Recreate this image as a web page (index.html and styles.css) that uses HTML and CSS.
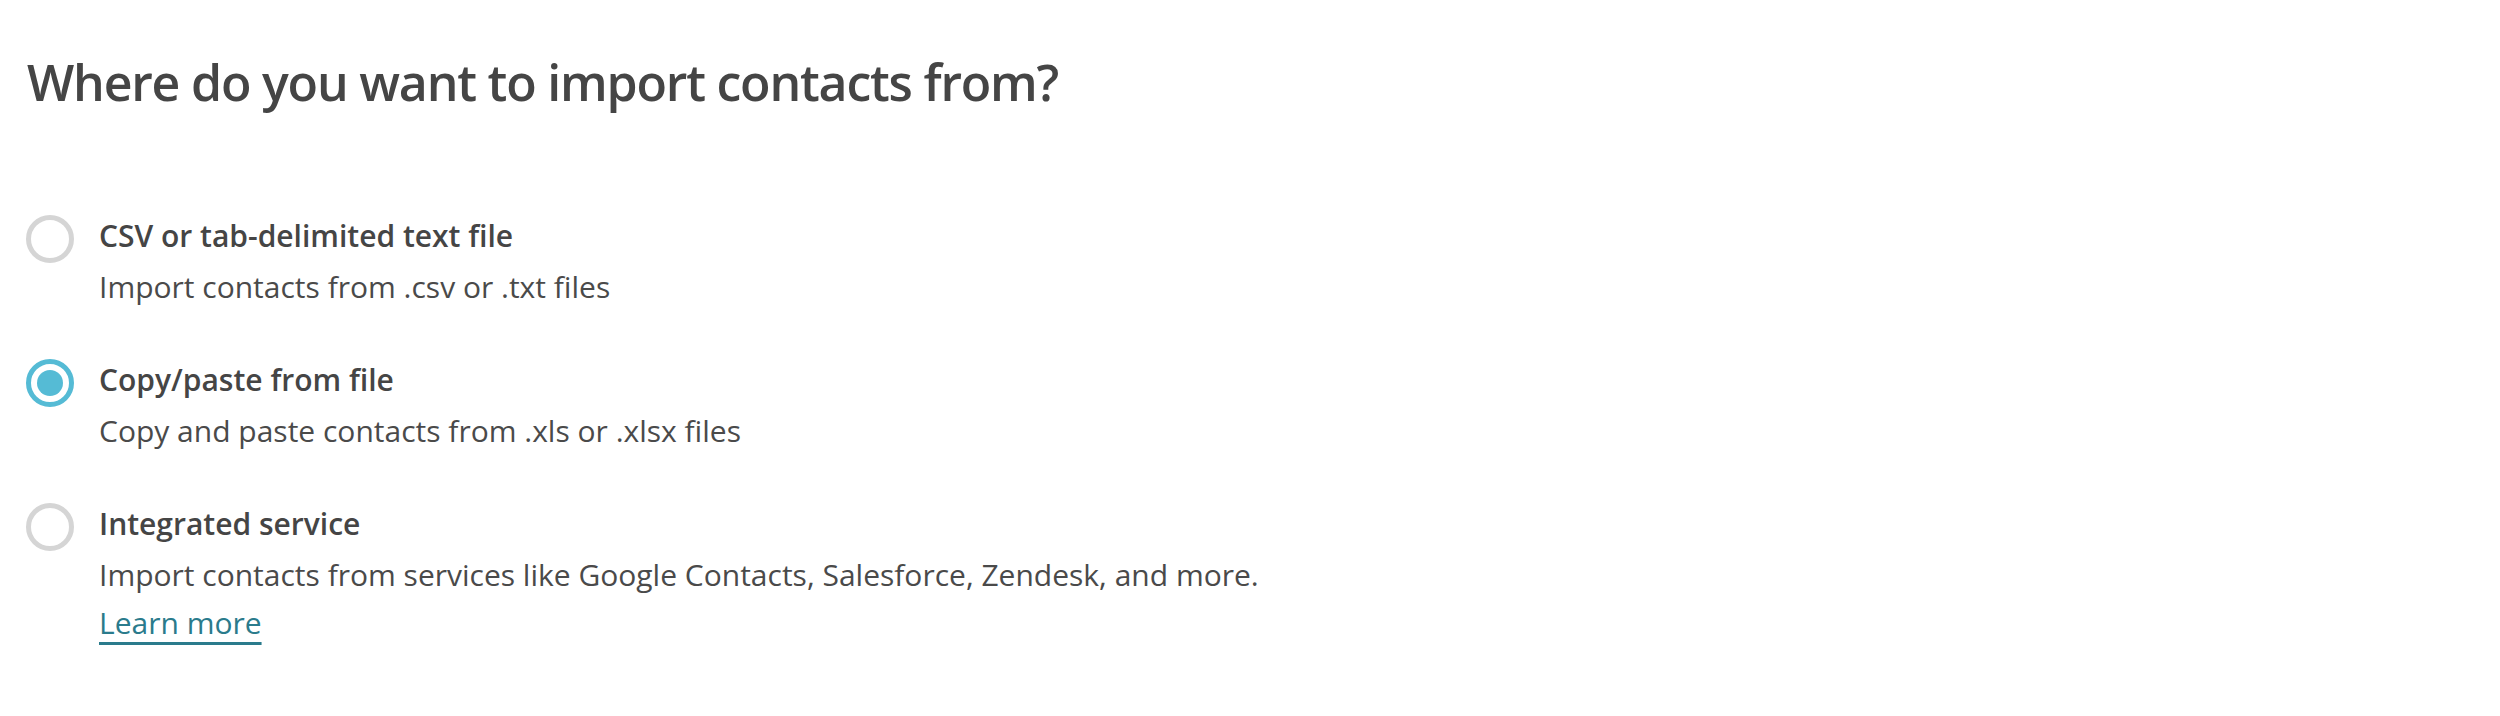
FILE: index.html
```html
<!DOCTYPE html>
<html lang="en">
<head>
<meta charset="utf-8">
<title>Import contacts</title>
<link rel="stylesheet" href="styles.css">
</head>
<body>
<main class="page">
  <h1 class="title">Where do you want to import contacts from?</h1>
  <div class="options">
    <label class="option">
      <span class="radio"></span>
      <span class="text">
        <span class="label">CSV or tab-delimited text file</span>
        <span class="desc">Import contacts from .csv or .txt files</span>
      </span>
    </label>
    <label class="option">
      <span class="radio radio--checked"></span>
      <span class="text">
        <span class="label">Copy/paste from file</span>
        <span class="desc">Copy and paste contacts from .xls or .xlsx files</span>
      </span>
    </label>
    <label class="option">
      <span class="radio"></span>
      <span class="text">
        <span class="label">Integrated service</span>
        <span class="desc">Import contacts from services like Google Contacts, Salesforce, Zendesk, and more.</span>
        <a class="link" href="#">Learn more</a>
      </span>
    </label>
  </div>
</main>
</body>
</html>
```
FILE: styles.css
```css
html, body {
  margin: 0;
  padding: 0;
  background: #ffffff;
}
body {
  font-family: "Open Sans", "Liberation Sans", sans-serif;
  color: #454545;
}
.page {
  padding: 52px 26px 0 26px;
}
.title {
  margin: 0 0 0 1px;
  font-size: 50px;
  line-height: 60px;
  font-weight: 600;
  letter-spacing: -1.2px;
  color: #454545;
}
.options {
  margin-top: 97px;
  display: flex;
  flex-direction: column;
  gap: 42px;
}
.option {
  display: flex;
  align-items: flex-start;
  gap: 25px;
}
.radio {
  flex: 0 0 auto;
  box-sizing: border-box;
  width: 48px;
  height: 48px;
  margin-top: 6px;
  border: 5px solid #d5d5d5;
  border-radius: 50%;
  display: flex;
  align-items: center;
  justify-content: center;
}
.radio--checked {
  border-color: #55bbd5;
}
.radio--checked::after {
  content: "";
  width: 26px;
  height: 26px;
  border-radius: 50%;
  background: #55bbd5;
}
.text {
  display: flex;
  flex-direction: column;
  align-items: flex-start;
  font-size: 30px;
}
.label {
  font-weight: 600;
  line-height: 54px;
  color: #454545;
}
.desc {
  font-weight: 400;
  line-height: 48px;
  color: #4a4a4a;
}
.link {
  color: #2a7b8c;
  line-height: 48px;
  text-decoration: underline;
  text-decoration-thickness: 3px;
  text-underline-offset: 8px;
}
```
